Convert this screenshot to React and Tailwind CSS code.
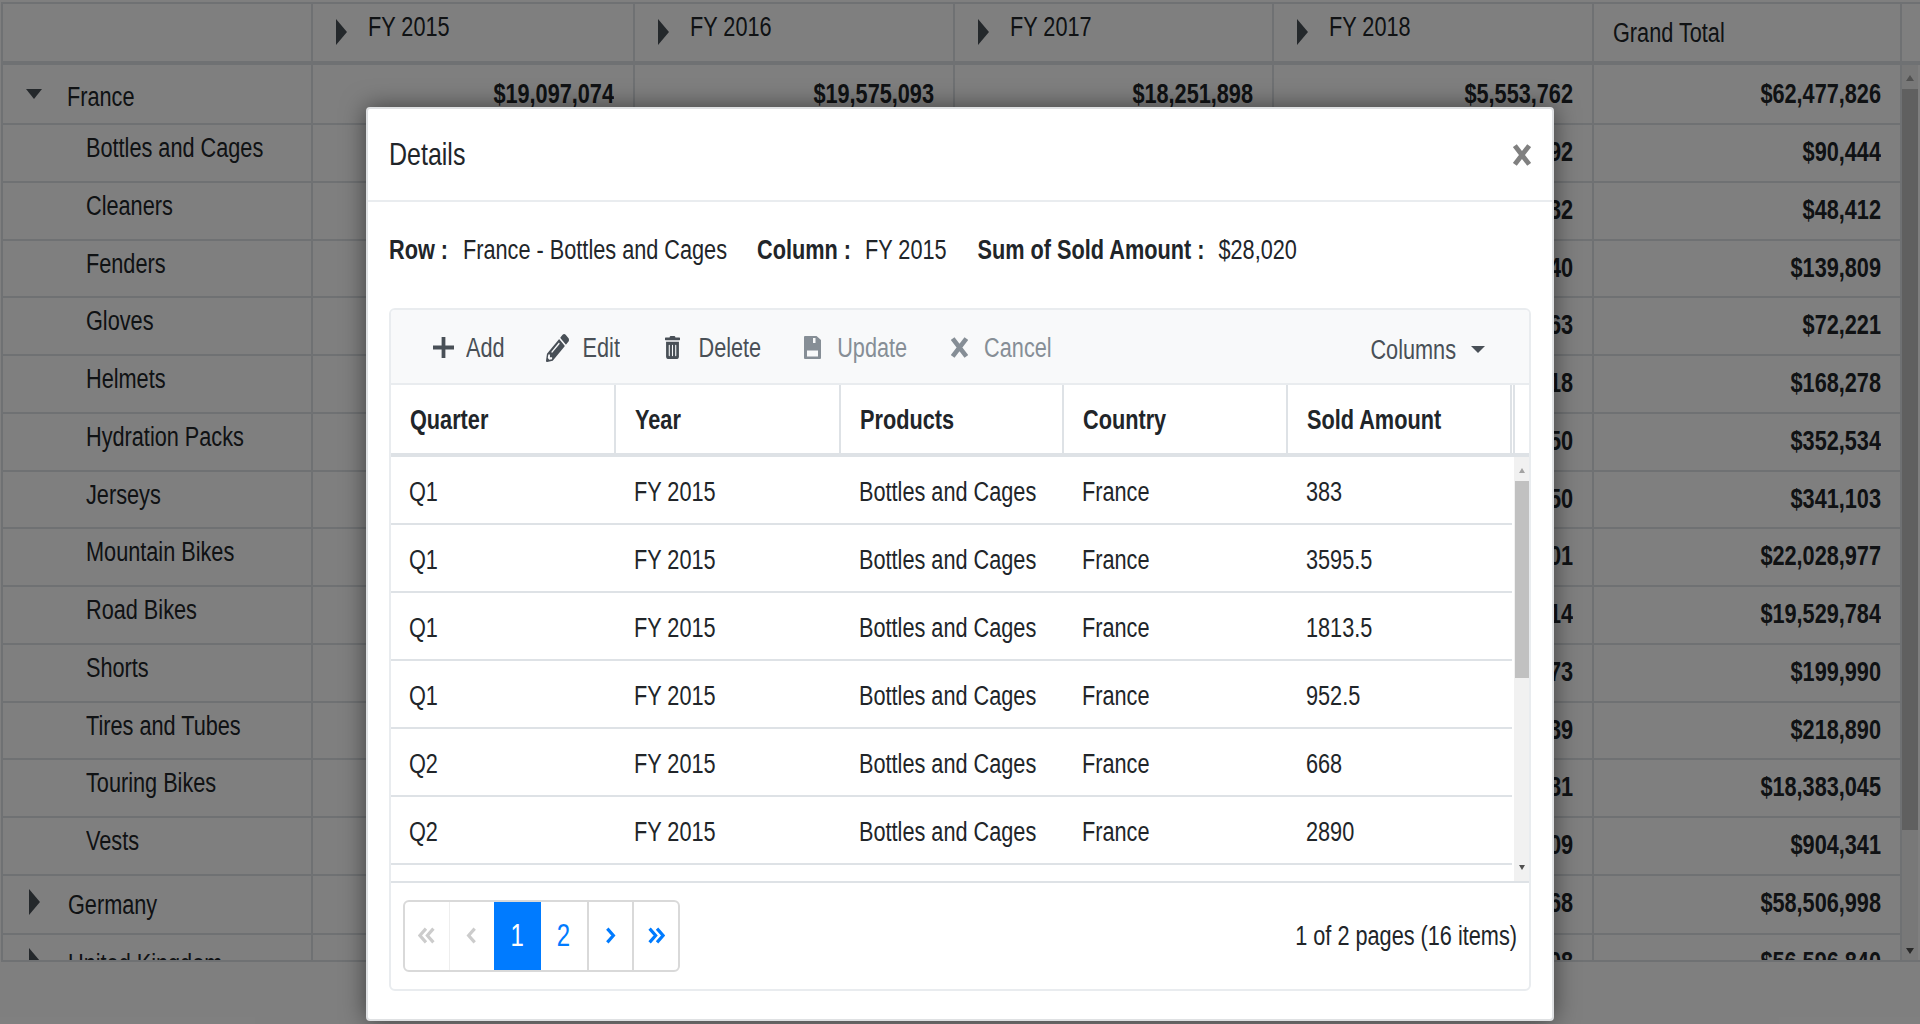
import React from 'react';
import { FaPencilAlt, FaTrashAlt } from 'react-icons/fa';

const pivotCols = 'grid grid-cols-[310px_322px_320px_319px_320px_308px]';
const detailCols = 'grid grid-cols-[225px_225px_223px_224px_224px]';

const pivotRows = [
  { name: 'Bottles and Cages', fy18: '92', total: '$90,444' },
  { name: 'Cleaners', fy18: '32', total: '$48,412' },
  { name: 'Fenders', fy18: '40', total: '$139,809' },
  { name: 'Gloves', fy18: '63', total: '$72,221' },
  { name: 'Helmets', fy18: '18', total: '$168,278' },
  { name: 'Hydration Packs', fy18: '50', total: '$352,534' },
  { name: 'Jerseys', fy18: '50', total: '$341,103' },
  { name: 'Mountain Bikes', fy18: '01', total: '$22,028,977' },
  { name: 'Road Bikes', fy18: '14', total: '$19,529,784' },
  { name: 'Shorts', fy18: '73', total: '$199,990' },
  { name: 'Tires and Tubes', fy18: '39', total: '$218,890' },
  { name: 'Touring Bikes', fy18: '81', total: '$18,383,045' },
  { name: 'Vests', fy18: '09', total: '$904,341' },
];

const detailRows = [
  ['Q1', '383'],
  ['Q1', '3595.5'],
  ['Q1', '1813.5'],
  ['Q1', '952.5'],
  ['Q2', '668'],
  ['Q2', '2890'],
];

// the screenshot is stretched vertically, so text is too
function T({ children, className = '' }) {
  return <span className={`inline-block scale-y-[1.28] whitespace-nowrap ${className}`}>{children}</span>;
}

function ArrowRight({ className = '' }) {
  return <span className={`block w-0 h-0 border-y-[13px] border-y-transparent border-l-[11px] border-l-[#495057] ${className}`} />;
}

function PlusIcon() {
  return (
    <svg viewBox="0 0 20 20" className="w-[21px] h-[21px]">
      <path d="M10 0v20M0 10h20" stroke="currentColor" strokeWidth="3.6" fill="none" />
    </svg>
  );
}

function CrossIcon({ className = '' }) {
  return (
    <svg viewBox="0 0 16 20" className={className}>
      <path d="M1.5 1.5l13 17M14.5 1.5l-13 17" stroke="currentColor" strokeWidth="4.4" fill="none" />
    </svg>
  );
}

function SaveIcon() {
  return (
    <svg viewBox="0 0 17 23" className="w-[17px] h-[23px]">
      <path
        fillRule="evenodd"
        fill="currentColor"
        d="M1 0h11.5L17 4v18a1 1 0 0 1-1 1H1a1 1 0 0 1-1-1V1a1 1 0 0 1 1-1zM3 14.5v6h11v-6zM9 2v5h2.5V2z"
      />
    </svg>
  );
}

function Chevrons({ points, className = '' }) {
  return (
    <svg viewBox="0 0 16 16" className={className}>
      {points.map((d) => (
        <path key={d} d={d} stroke="currentColor" strokeWidth="3" fill="none" />
      ))}
    </svg>
  );
}

function HeaderCell({ label }) {
  return (
    <div className="border-r-2 border-[#dee2e6] pl-[23px] flex">
      <ArrowRight className="mt-[15px]" />
      <T className="ml-[21px] mt-[8px] h-fit">{label}</T>
    </div>
  );
}

function Num({ value, top = 'mt-[12px]' }) {
  return (
    <div className="border-r-2 border-[#dee2e6] text-right pr-[19px] font-bold">
      <T className={top}>{value}</T>
    </div>
  );
}

function EmptyCell() {
  return <div className="border-r-2 border-[#dee2e6]" />;
}

function ToolButton({ icon, label, className = '' }) {
  return (
    <div className={`flex items-center ${className}`}>
      <span className="w-[26px] flex justify-center">{icon}</span>
      <T>{label}</T>
    </div>
  );
}

function PagerCell({ children, className = '' }) {
  return <div className={`flex items-center justify-center ${className}`}>{children}</div>;
}

export default function App() {
  return (
    <div className="relative h-[1024px] overflow-hidden bg-white text-[21.7px] leading-[30px] text-[#212529] font-['Liberation_Sans',Arial,sans-serif]">
      {/* pivot table behind the dialog */}
      <div className="mt-[2px] ml-[1px] h-[960px] overflow-hidden border-l-2 border-b-2 border-[#dee2e6]">
        <div className="border-t-2 border-[#dee2e6]">
          <div className={`${pivotCols} h-[61px] border-b-4 border-[#dee2e6]`}>
            <EmptyCell />
            <HeaderCell label="FY 2015" />
            <HeaderCell label="FY 2016" />
            <HeaderCell label="FY 2017" />
            <HeaderCell label="FY 2018" />
            <div className="border-r-2 border-[#dee2e6] pl-[19px] pt-[14px]">
              <T>Grand Total</T>
            </div>
          </div>
        </div>
        <div className="flex">
          <div className="w-[1899px]">
            <div className={`${pivotCols} h-[60px] border-b-2 border-[#dee2e6]`}>
              <div className="border-r-2 border-[#dee2e6] flex">
                <span className="block w-0 h-0 ml-[23px] mt-[24px] border-x-[8px] border-x-transparent border-t-[10px] border-t-[#495057]" />
                <T className="ml-[25px] mt-[17px] h-fit">France</T>
              </div>
              <Num value="$19,097,074" top="mt-[14px]" />
              <Num value="$19,575,093" top="mt-[14px]" />
              <Num value="$18,251,898" top="mt-[14px]" />
              <Num value="$5,553,762" top="mt-[14px]" />
              <Num value="$62,477,826" top="mt-[14px]" />
            </div>
            {pivotRows.map((row) => (
              <div key={row.name} className={`${pivotCols} h-[57.75px] border-b-2 border-[#dee2e6]`}>
                <div className="border-r-2 border-[#dee2e6] pl-[83px] pt-[8px]">
                  <T>{row.name}</T>
                </div>
                <EmptyCell />
                <EmptyCell />
                <EmptyCell />
                <Num value={row.fy18} />
                <Num value={row.total} />
              </div>
            ))}
            <div className={`${pivotCols} h-[59px] border-b-2 border-[#dee2e6]`}>
              <div className="border-r-2 border-[#dee2e6] flex">
                <ArrowRight className="ml-[26px] mt-[13px]" />
                <T className="ml-[28px] mt-[14px] h-fit">Germany</T>
              </div>
              <EmptyCell />
              <EmptyCell />
              <EmptyCell />
              <Num value="68" />
              <Num value="$58,506,998" />
            </div>
            <div className={`${pivotCols} h-[59px]`}>
              <div className="border-r-2 border-[#dee2e6] flex">
                <ArrowRight className="ml-[26px] mt-[13px]" />
                <T className="ml-[28px] mt-[14px] h-fit">United Kingdom</T>
              </div>
              <EmptyCell />
              <EmptyCell />
              <EmptyCell />
              <Num value="08" />
              <Num value="$56,596,840" />
            </div>
          </div>
          {/* page scrollbar */}
          <div className="w-[16px] h-[897px] bg-[#f1f1f1] flex flex-col items-center">
            <span className="block w-0 h-0 mt-[10px] border-x-[4px] border-x-transparent border-b-[6px] border-b-[#a3a3a3]" />
            <div className="w-full h-[741px] mt-[8px] bg-[#c1c1c1]" />
            <span className="block w-0 h-0 mt-[118px] border-x-[4px] border-x-transparent border-t-[6px] border-t-[#505050]" />
          </div>
        </div>
      </div>

      {/* dimmed backdrop */}
      <div className="absolute inset-0 bg-black/50" />

      {/* Details dialog */}
      <div className="absolute left-[366px] top-[107px] w-[1188px] h-[914px] bg-white rounded-[4px] border-2 border-[#dfe1e3] shadow-[0_0_24px_rgba(0,0,0,0.5)]">
        <div className="h-[93px] border-b-2 border-[#e9ecef] flex items-center justify-between pl-[21px] pr-[21px] pb-[4px]">
          <T className="text-[25px]">Details</T>
          <CrossIcon className="w-[18px] h-[22px] mt-[4px] text-[#808080]" />
        </div>

        <div className="pl-[21px] pt-[33px] h-[106px] flex">
          <T className="font-bold h-fit">Row :</T>
          <T className="ml-[15px] h-fit">France - Bottles and Cages</T>
          <T className="ml-[30px] font-bold h-fit">Column :</T>
          <T className="ml-[14px] h-fit">FY 2015</T>
          <T className="ml-[31px] font-bold h-fit">Sum of Sold Amount :</T>
          <T className="ml-[14px] h-fit">$28,020</T>
        </div>

        <div className="ml-[21px] w-[1142px] h-[683px] border-2 border-[#e9ecef] rounded-[6px] overflow-hidden">
          {/* toolbar */}
          <div className="h-[75px] bg-[#f8f9fa] border-b-2 border-[#e9ecef] flex items-center pl-[39px] pr-[44px] pt-[2px] text-[#495057]">
            <ToolButton className="gap-[10px]" icon={<PlusIcon />} label="Add" />
            <ToolButton className="ml-[40px] gap-[12px]" icon={<FaPencilAlt preserveAspectRatio="none" className="w-[23px] h-[28px]" />} label="Edit" />
            <ToolButton className="ml-[39.5px] gap-[13px]" icon={<FaTrashAlt preserveAspectRatio="none" className="w-[15px] h-[23px]" />} label="Delete" />
            <ToolButton className="ml-[38px] gap-[12px] text-[#868e96]" icon={<SaveIcon />} label="Update" />
            <ToolButton className="ml-[39px] gap-[12px] text-[#868e96]" icon={<CrossIcon className="w-[17px] h-[21px]" />} label="Cancel" />
            <div className="ml-auto flex items-center gap-[15px] mt-[4px]">
              <T>Columns</T>
              <span className="block w-0 h-0 border-x-[7px] border-x-transparent border-t-[7px] border-t-[#495057]" />
            </div>
          </div>

          {/* column headers */}
          <div className="flex h-[72px] border-b-4 border-[#dee2e6]">
            <div className={`${detailCols} w-[1121px] font-bold text-[#212529]`}>
              {['Quarter', 'Year', 'Products', 'Country', 'Sold Amount'].map((title) => (
                <div key={title} className="border-r-2 border-[#dee2e6] pl-[19px] pt-[20px]">
                  <T>{title}</T>
                </div>
              ))}
            </div>
            <div className="w-[2px] ml-[1px] bg-[#dee2e6]" />
          </div>

          {/* rows with inner scrollbar */}
          <div className="flex h-[426px] border-b-2 border-[#dee2e6]">
            <div className="w-[1121px]">
              {detailRows.map(([quarter, amount], i) => (
                <div key={i} className={`${detailCols} h-[68px] border-b-2 border-[#dee2e6]`}>
                  <div className="pl-[18px] pt-[20px]"><T>{quarter}</T></div>
                  <div className="pl-[18px] pt-[20px]"><T>FY 2015</T></div>
                  <div className="pl-[18px] pt-[20px]"><T>Bottles and Cages</T></div>
                  <div className="pl-[18px] pt-[20px]"><T>France</T></div>
                  <div className="pl-[18px] pt-[20px]"><T>{amount}</T></div>
                </div>
              ))}
            </div>
            <div className="flex-1 ml-[2px] bg-[#f1f1f1] flex flex-col items-center">
              <span className="block w-0 h-0 mt-[11px] border-x-[3px] border-x-transparent border-b-[5px] border-b-[#a3a3a3]" />
              <div className="w-[14px] h-[197px] mt-[8px] bg-[#c1c1c1]" />
              <span className="block w-0 h-0 mt-[187px] border-x-[3px] border-x-transparent border-t-[5px] border-t-[#505050]" />
            </div>
          </div>

          {/* pager */}
          <div className="flex items-center justify-between pl-[12px] pr-[12px] h-[105px]">
            <div className="flex h-[72px] border-2 border-[#d9d9d9] rounded-[6px] overflow-hidden">
              <PagerCell className="w-[44.5px] border-r border-[#eeeeee] text-[#cccccc]">
                <Chevrons points={['M7.5 1.5L1.8 8l5.7 6.5', 'M14.5 1.5L8.8 8l5.7 6.5']} className="w-[17px] h-[17px]" />
              </PagerCell>
              <PagerCell className="w-[44.5px] text-[#cccccc]">
                <Chevrons points={['M11 1.5L5.3 8l5.7 6.5']} className="w-[17px] h-[17px]" />
              </PagerCell>
              <PagerCell className="w-[46.5px] bg-[#007bff] text-white"><T className="text-[24px]">1</T></PagerCell>
              <PagerCell className="w-[48px] border-r-2 border-[#d9d9d9] text-[#007bff]"><T className="text-[24px]">2</T></PagerCell>
              <PagerCell className="w-[45.5px] border-r-2 border-[#d9d9d9] text-[#007bff]">
                <Chevrons points={['M5 1.5L10.7 8 5 14.5']} className="w-[17px] h-[17px]" />
              </PagerCell>
              <PagerCell className="w-[44px] text-[#007bff]">
                <Chevrons points={['M1.5 1.5L7.2 8l-5.7 6.5', 'M8.5 1.5L14.2 8l-5.7 6.5']} className="w-[17px] h-[17px]" />
              </PagerCell>
            </div>
            <T>1 of 2 pages (16 items)</T>
          </div>
        </div>
      </div>
    </div>
  );
}
